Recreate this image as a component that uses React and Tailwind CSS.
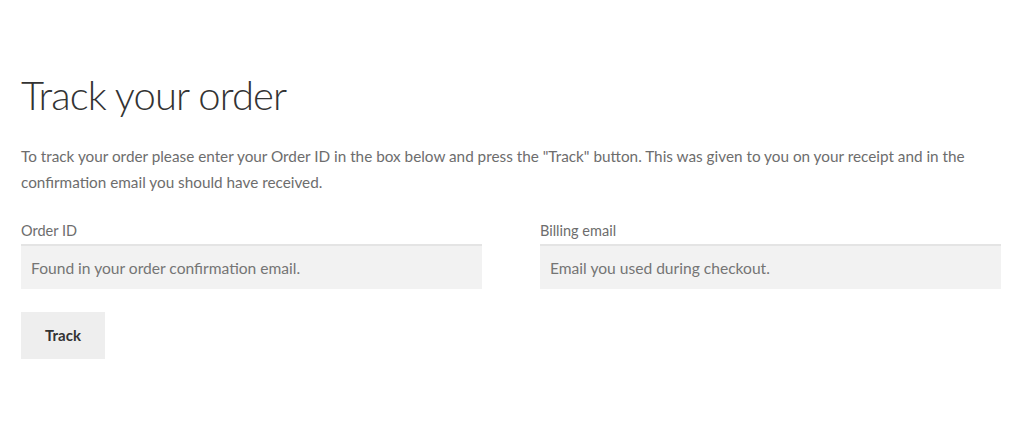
import React from 'react';

const Field = ({ label, placeholder }) => (
  <div className="flex flex-col">
    <label className="text-[14.5px] leading-[22px] text-[#6d6d6d] mb-[2px]">{label}</label>
    <input
      type="text"
      placeholder={placeholder}
      className="h-[45px] w-full bg-[#f2f2f2] border-t-2 border-[#e4e4e4] px-[10px] text-[15.6px] text-[#43454b] placeholder:text-[#757575] outline-none"
    />
  </div>
);

const App = () => {
  return (
    <div
      className="w-[1024px] h-[432px] bg-white px-[21px] pt-[69px]"
      style={{ fontFamily: 'Lato, "Noto Sans", sans-serif' }}
    >
      <h1 className="text-[40px] leading-[52px] font-light text-[#333333] tracking-[-0.9px]">
        Track your order
      </h1>

      <p className="mt-[22px] w-[980px] text-[15.3px] leading-[26px] text-[#6d6d6d]">
        To track your order please enter your Order ID in the box below and press the "Track" button. This was given to you on your receipt and in the confirmation email you should have received.
      </p>

      <div className="mt-[25px] w-[980px] grid grid-cols-2 gap-x-[58px]">
        <Field label="Order ID" placeholder="Found in your order confirmation email." />
        <Field label="Billing email" placeholder="Email you used during checkout." />
      </div>

      <button className="mt-[23px] h-[47px] w-[84px] bg-[#eeeeee] text-[15px] font-bold text-[#333333]">
        Track
      </button>
    </div>
  );
};

export default App;
